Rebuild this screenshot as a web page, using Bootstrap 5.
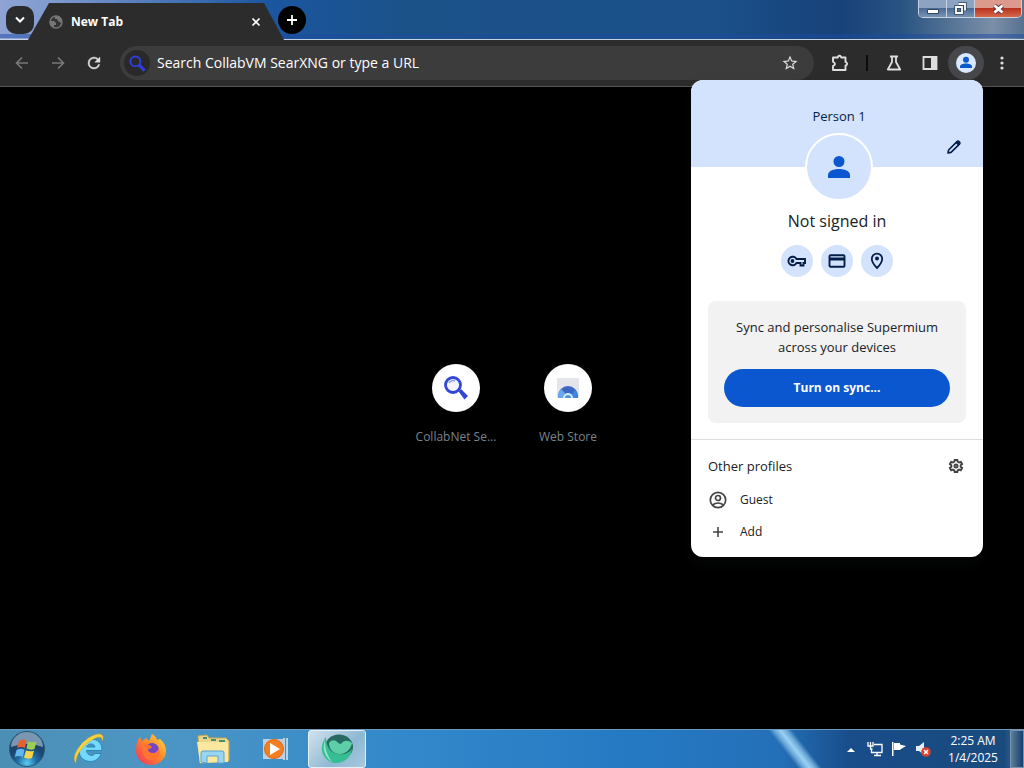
<!DOCTYPE html>
<html lang="en">
<head>
<meta charset="utf-8">
<meta name="viewport" content="width=device-width, initial-scale=1">
<title>New Tab</title>
<link href="https://cdn.jsdelivr.net/npm/bootstrap@5.3.0/dist/css/bootstrap.min.css" rel="stylesheet">
<style>
body{font-family:"Open Sans","Noto Sans",sans-serif;font-size:13px;line-height:20px;background:#000;color:#fff}
button{padding:0;border:0;background:none;color:inherit}
svg{display:block;flex:none}
/* title bar */
.titlebar{height:40px;padding-left:6px;background:linear-gradient(#0000 34px,#1c4aa080 34px 38px,#0000 38px),linear-gradient(90deg,#8fa3d4 0,#7f9bd0 5%,#1b56a0 26%,#1b5288 40%,#1b5089 70%,#174179 82%,#285381 88%,#7b8fa8 97%,#56718f);border-bottom:1px solid #c4d3e8}
.tabsearch{width:28px;height:28px;border-radius:10px;background:#2a2b2c}
.browser-tab{width:256px;height:37px;background:#2c2c2c;clip-path:polygon(0 100%,21px 0,236px 0,100% 100%);margin-left:-6px;margin-bottom:-1px;padding:0 23px 0 21px}
.tabtitle{font:700 12px/20px "Open Sans",sans-serif}
.newtab{width:28px;height:28px;background:#000;margin-left:-6px}
.winctl{height:18px;border:1px solid #c7d1df;border-top:0;border-radius:0 0 5px 5px;overflow:hidden;margin-right:2px}
.winctl button{width:28px;border-right:1px solid #c7d1df;background:linear-gradient(#8ca4c1 50%,#4a6b94 50%,#7793b2)}
.winctl .winclose{width:46px;border:0;background:linear-gradient(#dc9a8d 45%,#b9321f 50%,#d46a4a)}
/* toolbar */
.toolbar{height:47px;background:#2c2c2c;border-bottom:1px solid #555;padding:0 4px}
.toolbtn{width:36px;height:34px;color:#dedede}
.toolbtn:disabled{color:#777}
.omnibox{height:34px;background:#3c3c3c;margin:0 8px;padding:0 6px 0 4px}
.omnibox input{background:none;border:0;outline:0;color:#fff;font-size:14px;padding:0 0 0 7px}
.omnibox input::placeholder{color:#fff;opacity:1}
.engine{width:26px;height:26px;background:#292929}
.divider{width:2px;height:16px;background:#0c0c0c;margin:0 8px}
.who{background:#45474b;border-radius:17px}
/* new tab page */
.tile{width:112px;height:120px;padding-top:16px;color:#77858d;font-size:12px;text-decoration:none}
.tileicon{width:48px;height:48px;background:#fff;margin-bottom:15px}
/* profile menu */
.profile{top:80px;right:41px;width:292px;border-radius:12px;background:#fff;color:#202124;overflow:hidden}
.profilehead{height:87px;background:#d3e3fd;color:#041e49;padding:26px 0 0 4px}
.editbtn{top:56px;right:18px;width:22px;height:22px;color:#041e49}
.avatarrow{margin:-34px 0 8px;padding-left:4px}
.avatar{width:68px;height:68px;border:2px solid #fff;background:#d3e3fd}
.state{font-size:16px;line-height:24px;margin-bottom:12px}
.chip{width:32px;height:32px;background:#d3e3fd;color:#041e49}
.syncbox{background:#f2f2f2;border-radius:8px;margin:24px 17px 16px;padding:16px}
.syncbtn{height:38px;background:#0b57d0;color:#fff;font-weight:700;font-size:12px;margin-top:12px}
.others{border-top:1px solid #dedede;padding:14px 17px 9px}
.othershead{margin-bottom:6px}
.othershead h2{font-size:13px;font-weight:400;line-height:24px;margin:0}
.gear{color:#444;margin-right:2px}
.profilerow{height:32px;gap:12px;font-size:12px}
/* taskbar */
.taskbar{height:39px;border-top:1px solid #6e9bbd;background:linear-gradient(52deg,#0000 44%,#6ba9d8 47%,#9bd0f4 50%,#6ba9d8 53%,#0000 56%) 710px 0/170px 100% no-repeat,linear-gradient(90deg,#4c8fb4 0,#4c96c4 15%,#3288ca 40%,#2579c3 62%,#2470b8 76%,#194d8a 83%,#194a7d 98%,#4a7099)}
.startbtn{width:54px;margin-right:4px}
.taskbtn{width:58px;height:38px;margin:0 2px}
.taskbtn.current{border:1px solid #e2f0f8;border-radius:3px;background:linear-gradient(135deg,#d2e2ec,#8eb9d2 60%,#a7c8de)}
.tray{gap:8px}
.clock{width:64px;margin:0 -3px 0 2px;font-size:12px;line-height:17px}
.showdesk{width:14px;border:1px solid #7893ae;background:linear-gradient(90deg,#5e7d9a,#143f6c)}
</style>
</head>
<body class="d-flex flex-column min-vh-100 position-relative">
<header>
  <div class="titlebar d-flex align-items-center">
    <button class="tabsearch d-flex align-items-center justify-content-center" aria-label="Search tabs"><svg width="10" height="8" viewBox="0 0 10 8" fill="none" stroke="#fff" stroke-width="2"><path d="M1 1.5 5 5.5 9 1.5"/></svg></button>
    <div class="browser-tab d-flex align-items-center align-self-end">
      <svg width="14" height="14" viewBox="0 0 14 14"><circle cx="7" cy="7" r="6" fill="#333" stroke="#777" stroke-width="1.5"/><path d="M1 6h4l2 2v2H5v3L2 10zM6 1v3h2l1 2 3 2 1-3-2-3z" fill="#777"/></svg>
      <span class="tabtitle ms-2 flex-grow-1">New Tab</span>
      <button aria-label="Close tab"><svg width="10" height="10" viewBox="0 0 10 10" stroke="#fff" stroke-width="1.7"><path d="m1.5 1.5 7 7m0-7-7 7"/></svg></button>
    </div>
    <button class="newtab rounded-circle d-flex align-items-center justify-content-center" aria-label="New tab"><svg width="12" height="12" viewBox="0 0 12 12" stroke="#fff" stroke-width="1.8"><path d="M6 1v10M1 6h10"/></svg></button>
    <div class="winctl d-flex ms-auto align-self-start">
      <button class="d-flex align-items-center justify-content-center" aria-label="Minimize"><svg width="12" height="12" viewBox="0 0 12 12"><path d="M.5 6.500h11v4H.5z" fill="#fff" stroke="#34465d"/></svg></button>
      <button class="d-flex align-items-center justify-content-center" aria-label="Restore"><svg width="13" height="13" viewBox="0 0 13 13" fill="none"><path d="M4.500 2H11v6.500M2 5h6v6H2z" stroke="#34465d" stroke-width="3.500"/><path d="M4.500 2H11v6.500M2 5h6v6H2z" stroke="#fff" stroke-width="1.800"/></svg></button>
      <button class="winclose d-flex align-items-center justify-content-center" aria-label="Close"><svg width="13" height="12" viewBox="0 0 13 12"><path d="m2.500 2.500 8 7m0-7-8 7" stroke="#613238" stroke-width="4.500"/><path d="m2.500 2.500 8 7m0-7-8 7" stroke="#fff" stroke-width="2.800"/></svg></button>
    </div>
  </div>
  <nav class="toolbar d-flex align-items-center" aria-label="Browser toolbar">
    <button class="toolbtn d-flex align-items-center justify-content-center" disabled aria-label="Back"><svg width="14" height="14" viewBox="0 0 14 14" fill="none" stroke="currentColor" stroke-width="1.700"><path d="M13 7H2M7 1.500 1.500 7 7 12.500"/></svg></button>
    <button class="toolbtn d-flex align-items-center justify-content-center" disabled aria-label="Forward"><svg width="14" height="14" viewBox="0 0 14 14" fill="none" stroke="currentColor" stroke-width="1.700"><path d="M1 7h11M7 1.500 12.500 7 7 12.500"/></svg></button>
    <button class="toolbtn d-flex align-items-center justify-content-center" aria-label="Reload"><svg width="18" height="18" viewBox="0 0 24 24" fill="currentColor" stroke="currentColor" stroke-width=".5"><path d="M17.650 6.350A7.960 7.960 0 0 0 12 4a8 8 0 1 0 7.730 10h-2.080A6 6 0 1 1 12 6c1.660 0 3.140.69 4.220 1.780L13 11h7V4z"/></svg></button>
    <div class="omnibox rounded-pill d-flex align-items-center flex-grow-1">
      <span class="engine rounded-circle d-flex align-items-center justify-content-center"><svg width="17" height="17" viewBox="0 0 24 24" fill="none" stroke="#303de0"><circle cx="9" cy="9" r="7" stroke-width="2.800"/><path d="m14 14 8 8" stroke-width="4.500"/></svg></span>
      <input class="flex-grow-1" type="text" aria-label="Address and search bar" placeholder="Search CollabVM SearXNG or type a URL">
      <button class="toolbtn d-flex align-items-center justify-content-center" aria-label="Bookmark"><svg width="18" height="18" viewBox="0 0 24 24" fill="currentColor"><path d="m22 9.240-7.190-.62L12 2 9.190 8.630 2 9.240l5.460 4.730L5.820 21 12 17.270 18.180 21l-1.630-7.030zM12 15.400l-3.760 2.270 1-4.280-3.320-2.880 4.380-.38L12 6.100l1.710 4.040 4.380.38-3.320 2.880 1 4.280z"/></svg></button>
    </div>
    <button class="toolbtn d-flex align-items-center justify-content-center" aria-label="Extensions"><svg width="18" height="18" viewBox="0 0 18 18"><path d="M2 3.500h4.800v-.7q1.700-2 3.400 0v.7h4.300v4.600h.7q1.800 1.600 0 3.300h-.7V16H2v-3.900q4-2.100 0-4.400z" fill="none" stroke="currentColor" stroke-width="1.900" stroke-linejoin="round"/></svg></button>
    <span class="divider"></span>
    <button class="toolbtn d-flex align-items-center justify-content-center" aria-label="Experiments"><svg width="16" height="16" viewBox="0 0 16 16" fill="none" stroke="currentColor" stroke-width="1.800" stroke-linejoin="round"><path d="M4 1.500h8M6 1.500v5.500L1.800 14.500h12.400L10 7V1.500"/></svg></button>
    <button class="toolbtn d-flex align-items-center justify-content-center" aria-label="Side panel"><svg width="16" height="14" viewBox="0 0 16 14"><path d="M1.500 1h13v12h-13z" fill="none" stroke="currentColor" stroke-width="1.800"/><path d="M9 1h6v12H9z" fill="currentColor"/></svg></button>
    <button class="toolbtn who d-flex align-items-center justify-content-center" aria-label="Profile"><svg width="20" height="20" viewBox="0 0 20 20"><circle cx="10" cy="10" r="10" fill="#d9e7ff"/><g fill="#0b57d0"><circle cx="10" cy="6.700" r="3"/><path d="M4 15v-1.500c0-4 12-4 12 0V15z"/></g></svg></button>
    <button class="toolbtn d-flex align-items-center justify-content-center" aria-label="Menu"><svg width="4" height="14" viewBox="0 0 4 14" fill="currentColor"><circle cx="2" cy="2" r="1.600"/><circle cx="2" cy="7" r="1.600"/><circle cx="2" cy="12" r="1.600"/></svg></button>
  </nav>
</header>

<main class="flex-grow-1 d-flex align-items-center justify-content-center">
  <a href="#" class="tile d-flex flex-column align-items-center"><span class="tileicon rounded-circle d-flex align-items-center justify-content-center"><svg width="24" height="24" viewBox="0 0 24 24"><path d="m14.500 15.500 2.500-2.500 7 7-3.500 3.500z" fill="#3346d4"/><circle cx="9" cy="9" r="7.500" fill="#f4f6ff" stroke="#3346d4" stroke-width="2.800"/><path d="M5 7c1-2 4-3 6-2" fill="none" stroke="#8a9aef" stroke-width="1.500"/></svg></span>CollabNet Se...</a>
  <a href="#" class="tile d-flex flex-column align-items-center"><span class="tileicon rounded-circle d-flex align-items-center justify-content-center"><svg width="22" height="20" viewBox="0 0 22 20"><path d="M0 0h22v20H0z" fill="#e4e5ea"/><path d="M1 20v-2a10 10 0 0 1 20 0v2z" fill="#3c67c4"/><path d="M1 20q0-6 3-9l4 4-2 5z" fill="#69a7ee"/><path d="M14 20v-3l4-5q3 3 3 8z" fill="#3f84df"/><path d="M6 20a5 5 0 0 1 10 0z" fill="#d4ecff"/><path d="M8 20a3 3 0 0 1 6 0z" fill="#4b98d8"/></svg></span>Web Store</a>
</main>

<section class="profile position-absolute shadow" aria-label="Profile menu">
  <div class="profilehead text-center">Person 1</div>
  <button class="editbtn position-absolute d-flex align-items-center justify-content-center" aria-label="Edit profile"><svg width="16" height="16" viewBox="0 0 16 16" fill="none" stroke="currentColor" stroke-width="1.600" stroke-linejoin="round"><path d="m2 14 .6-3L11 2.600q1-1 2 0l.5.5q1 1 0 2L5 13.400z"/><path d="m10.500 3 2.500 2.500" stroke-width="2.500"/></svg></button>
  <div class="avatarrow position-relative d-flex justify-content-center">
    <div class="avatar rounded-circle d-flex align-items-center justify-content-center"><svg width="24" height="24" viewBox="0 0 24 24" fill="#0b57d0"><circle cx="12" cy="6.500" r="5.500"/><path d="M1 23v-3c0-8 22-8 22 0v3z"/></svg></div>
  </div>
  <div class="state text-center">Not signed in</div>
  <div class="d-flex justify-content-center gap-2">
    <span class="chip rounded-circle d-flex align-items-center justify-content-center"><svg width="20" height="14" viewBox="0 0 20 14"><path d="M9.500 5H18v4h-1.500v2.500h-3V9h-4A4.300 4.300 0 1 1 9.500 5z" fill="none" stroke="currentColor" stroke-width="1.900"/><circle cx="5.500" cy="7" r="1.900" fill="currentColor"/></svg></span>
    <span class="chip rounded-circle d-flex align-items-center justify-content-center"><svg width="18" height="14" viewBox="0 0 18 14"><rect x="1.500" y="1.300" width="15" height="11.400" rx="1" fill="none" stroke="currentColor" stroke-width="1.900"/><path d="M1 3.500h16v3H1z" fill="currentColor"/></svg></span>
    <span class="chip rounded-circle d-flex align-items-center justify-content-center"><svg width="14" height="18" viewBox="0 0 14 18"><path d="M7 16C3.500 12.500 1.800 9.500 1.800 6.800a5.200 5.200 0 0 1 10.400 0C12.200 9.500 10.500 12.500 7 16z" fill="none" stroke="currentColor" stroke-width="1.800"/><circle cx="7" cy="6.500" r="2" fill="currentColor"/></svg></span>
  </div>
  <div class="syncbox text-center">
    <div>Sync and personalise Supermium<br>across your devices</div>
    <button class="syncbtn rounded-pill w-100">Turn on sync...</button>
  </div>
  <div class="others">
    <div class="othershead d-flex align-items-center justify-content-between">
      <h2>Other profiles</h2>
      <button class="gear" aria-label="Manage profiles"><svg width="16" height="16" viewBox="0 0 16 16" fill="none" stroke="currentColor" stroke-width="2"><path d="M6.700 2h2.600l.4 1.700 1.400.8 1.700-.6 1.300 2.200-1.400 1.200v1.500l1.400 1.200-1.300 2.200-1.700-.6-1.400.8-.4 1.700H6.700l-.4-1.700-1.400-.8-1.700.6L1.900 10l1.400-1.200V7.300L1.900 6.100l1.300-2.200 1.700.6 1.400-.8z"/><circle cx="8" cy="8.050" r="1.500"/></svg></button>
    </div>
    <button class="profilerow d-flex align-items-center w-100"><svg width="20" height="20" viewBox="0 0 20 20" fill="none" stroke="#444" stroke-width="1.700"><circle cx="10" cy="10" r="7.700"/><circle cx="10" cy="8" r="2.500"/><path d="M4.500 15q5.500-4 11 0"/></svg>Guest</button>
    <button class="profilerow d-flex align-items-center w-100"><svg width="20" height="20" viewBox="0 0 20 20" stroke="#444" stroke-width="1.600"><path d="M10 5v10M5 10h10"/></svg>Add</button>
  </div>
</section>

<footer class="taskbar d-flex">
  <button class="startbtn d-flex align-items-center justify-content-center" aria-label="Start"><svg width="38" height="38" viewBox="0 0 38 38"><defs><radialGradient id="orb" cy=".9"><stop stop-color="#5ccdf0"/><stop offset=".55" stop-color="#1e6da5"/><stop offset="1" stop-color="#1d446f"/></radialGradient></defs><circle cx="19" cy="19" r="17.500" fill="url(#orb)" stroke="#2b5878"/><path d="M3 17a16 15 0 0 1 32 0q-16-6-32 0z" fill="#c6dce8" opacity=".55"/><path d="M11 11q4-2.500 7.500-.5L17 18q-4-2-8 .2z" fill="#e8602c"/><path d="M20 11.500q4 1.500 8.500 0L26.500 19q-4 1.500-8-.5z" fill="#9dce52"/><path d="M8.500 20q4-2.200 8-.2L14.800 27q-4-2-8 0z" fill="#62b7ef"/><path d="M18 20.500q4 1.500 8 .2L24 28q-4 1.500-8-.5z" fill="#fbd34c"/></svg></button>
  <button class="taskbtn d-flex align-items-center justify-content-center" aria-label="Internet Explorer"><svg width="34" height="34" viewBox="0 0 34 34"><path d="M30 18.500H14.500c.4 5 6.500 6.400 8.500 3h6.300C27 27 23 29.500 18.500 29.500 11.500 29.500 7 25 7 18.500 7 11 12 7 18.500 7 25.500 7 30.500 11 30 18.500zM14.700 15h8.300c-.7-4-7.300-4-8.300 0z" fill="#73d8fa" stroke="#2688bd"/><path d="M4 31C-2 25 9 9 20 4c6-3 12-3 11 3l-1 2c1-5-4-5-10-1C11 13 3 24 4 31z" fill="#f6d33c" stroke="#c9a72a" stroke-width=".5"/></svg></button>
  <button class="taskbtn d-flex align-items-center justify-content-center" aria-label="Firefox"><svg width="34" height="34" viewBox="0 0 34 34"><defs><linearGradient id="fox" x1="1" x2="0" y2="1"><stop stop-color="#ffe24a"/><stop offset=".45" stop-color="#ff8a27"/><stop offset="1" stop-color="#f02c62"/></linearGradient></defs><path d="M3 10q1-3 3-5l2 4 4-3 3 3 3-7q4 2 5 6l3-1q6 5 6 12c0 8-7 14-15 14S2 27 2 19q0-5 1-9z" fill="url(#fox)"/><circle cx="18" cy="18" r="7" fill="#7545c8"/><path d="M8 13q7-2 10 2-1 2-4 2 0 4 5 4 4 0 6-5 3 9-5 12-12 2-12-15z" fill="#ff7530"/></svg></button>
  <button class="taskbtn d-flex align-items-center justify-content-center" aria-label="File Explorer"><svg width="36" height="32" viewBox="0 0 36 32"><path d="M3 3 12 2l2 3h17l3 3v20L5 30z" fill="#ead58a" stroke="#c5a950"/><path d="M2 9h31v20l-28 1z" fill="#fae8a0"/><path d="M8 5h4M16 7h5M24 8h6" stroke="#4c8c71" stroke-width="2"/><path d="M6 29V20q0-2 2-2h19q2 0 2 2v10h-6v-7H12v7z" fill="#99d5f1" stroke="#5aa4d0"/></svg></button>
  <button class="taskbtn d-flex align-items-center justify-content-center" aria-label="Media Player"><svg width="28" height="28" viewBox="0 0 28 28"><path d="M2 4h20v20H2z" fill="#bfcddd"/><path d="M23 3v22M26 3v22" stroke="#d9edfb" stroke-width="1.500"/><circle cx="13" cy="14" r="9.500" fill="#f47f20" stroke="#dc681b"/><path d="m9 8 10 6-10 6z" fill="#fff"/></svg></button>
  <button class="taskbtn current d-flex align-items-center justify-content-center" aria-label="Supermium"><svg width="34" height="32" viewBox="0 0 34 32"><ellipse cx="19" cy="14" rx="14" ry="12.500" fill="#286a62"/><path d="M6 4C-2 14 2 27 14 30c9 1 17-5 18-14-3 4-8 6-13 5-7 0-13-6-13-17z" fill="#36bd94"/><path d="M9 10c3-4 7-3 9 0l3 1c3-4 7-4 11-1-1 6-6 11-12 11-7 0-11-5-11-11z" fill="#5ccfa8"/><path d="M5 7c-3 8-1 16 7 22-6-9-7-14-7-22z" fill="#8be8c8"/></svg></button>
  <div class="tray d-flex align-items-center ms-auto">
    <button class="me-1" aria-label="Show hidden icons"><svg width="8" height="5" viewBox="0 0 8 5"><path d="m0 5 4-4 4 4z" fill="#fff"/></svg></button>
    <svg width="16" height="16" viewBox="0 0 16 16" fill="none" stroke="#fff" stroke-width="1.300"><path d="M7 3.500h8v8H4.500V8M7 14.500h7M10 12v2M1 1v4h5V1M3.500 1v7h2"/></svg>
    <svg width="16" height="16" viewBox="0 0 16 16" fill="#fff"><path d="M1 1h1.500v14H1zM3 2h6v1.500l6 1.500-5 3-1 1H3z"/></svg>
    <svg width="16" height="16" viewBox="0 0 16 16"><path d="M1 5h3l5-4v13l-5-4H1z" fill="#e8edf2"/><circle cx="11" cy="11" r="4.800" fill="#d9412d"/><path d="m9 9 4 4m0-4-4 4" stroke="#fff" stroke-width="1.500"/></svg>
    <time class="clock text-center" datetime="2025-01-04T02:25">2:25 AM<br>1/4/2025</time>
    <button class="showdesk align-self-stretch" aria-label="Show desktop"></button>
  </div>
</footer>
<script src="https://cdn.jsdelivr.net/npm/bootstrap@5.3.0/dist/js/bootstrap.bundle.min.js"></script>
</body>
</html>
